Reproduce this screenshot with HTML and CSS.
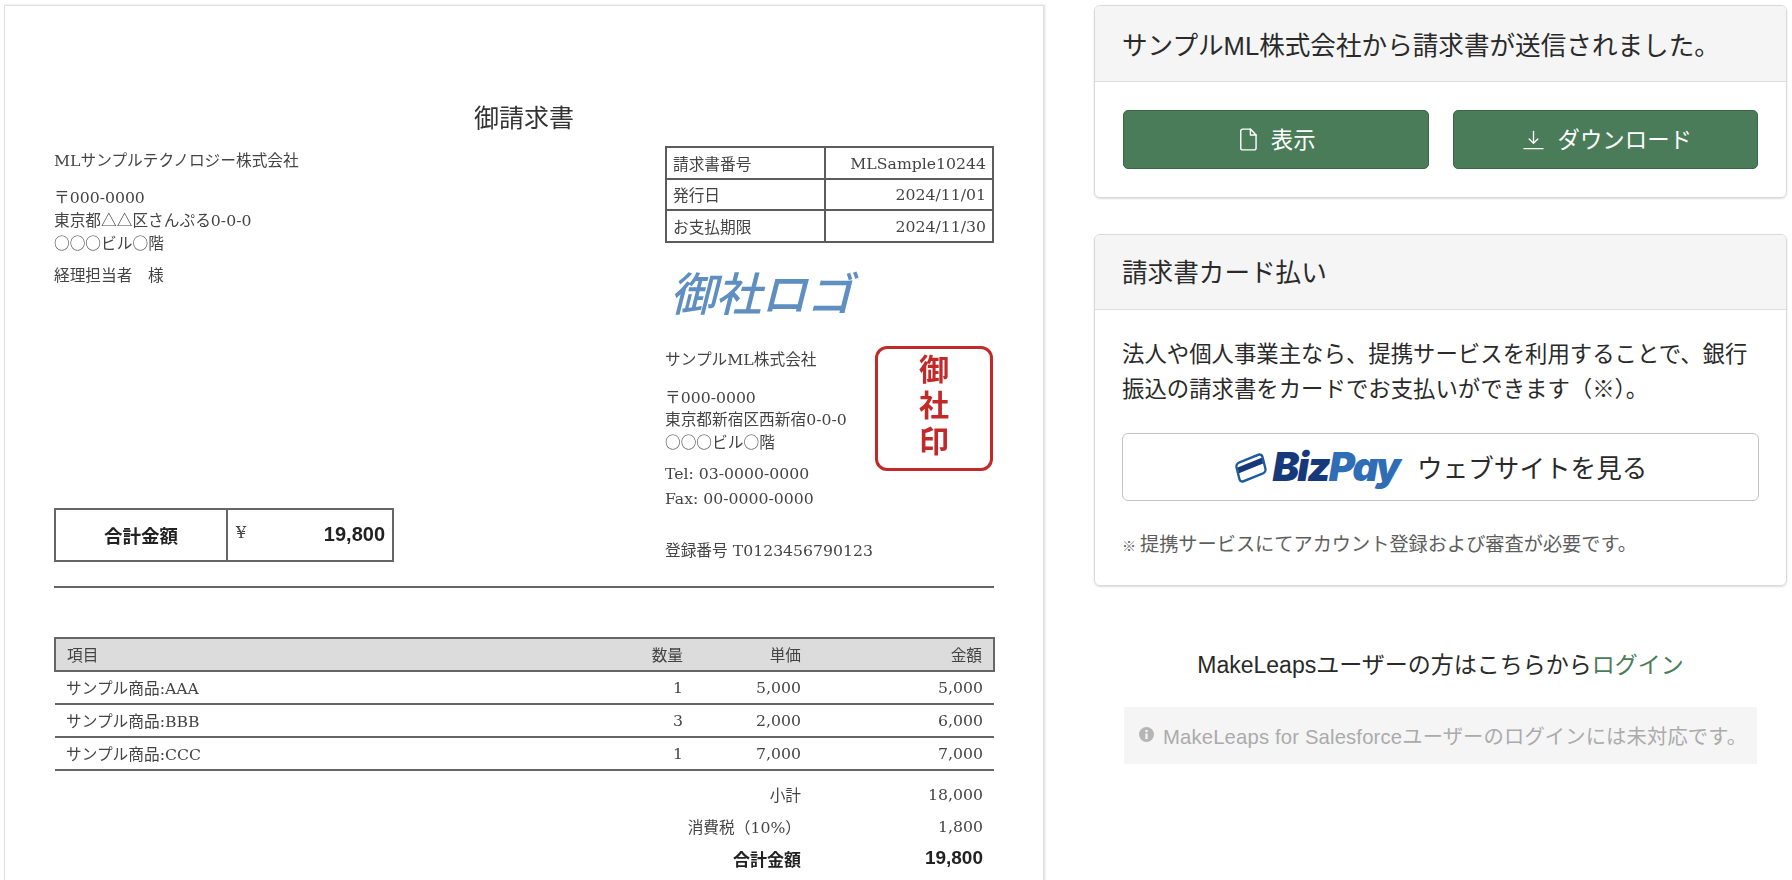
FILE: index.html
```html
<!DOCTYPE html>
<html lang="ja">
<head>
<meta charset="utf-8">
<title>御請求書</title>
<link rel="stylesheet" href="styles.css">
</head>
<body>
<main class="page">
  <section class="doc">
    <div class="doc-inner">
      <h1 class="doc-title">御請求書</h1>
      <div class="doc-top">
        <div class="doc-left">
          <p class="line">MLサンプルテクノロジー株式会社</p>
          <p class="line gap-16">〒000-0000</p>
          <p class="line">東京都<span class="sym">△△</span>区さんぷる0-0-0</p>
          <p class="line"><span class="sym">○○○</span>ビル<span class="sym">○</span>階</p>
          <p class="line gap-10">経理担当者　様</p>
          <div class="total-box">
            <div class="total-label">合計金額</div>
            <div class="total-value"><span class="yen">¥</span><span class="total-num">19,800</span></div>
          </div>
        </div>
        <div class="doc-right">
          <table class="meta">
            <tr><td>請求書番号</td><td class="r">MLSample10244</td></tr>
            <tr><td>発行日</td><td class="r">2024/11/01</td></tr>
            <tr><td>お支払期限</td><td class="r">2024/11/30</td></tr>
          </table>
          <div class="logo-text">御社ロゴ</div>
          <div class="issuer">
            <div class="issuer-text">
              <p class="line">サンプルML株式会社</p>
              <p class="line gap-16">〒000-0000</p>
              <p class="line">東京都新宿区西新宿0-0-0</p>
              <p class="line"><span class="sym">○○○</span>ビル<span class="sym">○</span>階</p>
              <p class="line gap-10">Tel: 03-0000-0000</p>
              <p class="line gap-3">Fax: 00-0000-0000</p>
            </div>
            <div class="stamp"><span class="stamp-text">御社印</span></div>
          </div>
          <p class="line reg">登録番号 T0123456790123</p>
        </div>
      </div>
      <div class="rule"></div>
      <table class="items">
        <colgroup><col class="c1"><col class="c2"><col class="c3"><col class="c4"></colgroup>
        <thead>
          <tr><th class="l">項目</th><th>数量</th><th>単価</th><th>金額</th></tr>
        </thead>
        <tbody>
          <tr><td class="l">サンプル商品:AAA</td><td>1</td><td>5,000</td><td>5,000</td></tr>
          <tr><td class="l">サンプル商品:BBB</td><td>3</td><td>2,000</td><td>6,000</td></tr>
          <tr><td class="l">サンプル商品:CCC</td><td>1</td><td>7,000</td><td>7,000</td></tr>
        </tbody>
        <tfoot>
          <tr class="sum-first"><td colspan="3">小計</td><td>18,000</td></tr>
          <tr><td colspan="3">消費税（10%）</td><td>1,800</td></tr>
          <tr class="sum-total"><td colspan="3">合計金額</td><td class="sum-num">19,800</td></tr>
        </tfoot>
      </table>
    </div>
  </section>

  <aside class="side">
    <section class="card">
      <header class="card-head">サンプルML株式会社から請求書が送信されました。</header>
      <div class="card-body actions">
        <a class="btn">
          <svg class="ico-file" viewBox="0 0 18 24" fill="none" stroke="#fff" stroke-width="1.5" stroke-linejoin="round" stroke-linecap="round"><path d="M2.8 1h8.2l6 6.2v13.8a2 2 0 0 1-2 2H2.8a2 2 0 0 1-2-2V3a2 2 0 0 1 2-2z"/><path d="M11 1v6.2h6"/></svg>
          <span class="btn-text">表示</span>
        </a>
        <a class="btn">
          <svg class="ico-dl" viewBox="0 0 22 20" fill="none" stroke="#fff" stroke-width="1.4" stroke-linecap="round" stroke-linejoin="round"><path d="M11 1v12"/><path d="M6.5 9l4.5 4.5L15.500 9"/><path d="M1 19h20"/></svg>
          <span class="btn-text">ダウンロード</span>
        </a>
      </div>
    </section>

    <section class="card card-pay">
      <header class="card-head card-head-pay">請求書カード払い</header>
      <div class="card-body pay">
        <p class="pay-text">法人や個人事業主なら、提携サービスを利用することで、銀行振込の請求書をカードでお支払いができます（※）。</p>
        <a class="biz-btn">
          <span class="biz-logo">
            <svg class="biz-card" viewBox="0 0 36 32" fill="none"><g transform="rotate(-22 18 16) skewX(-8)"><rect x="5" y="7" width="28" height="19" rx="3.5" stroke="#1f5a9e" stroke-width="2.4" fill="#fff"/><rect x="6" y="11" width="26" height="6" fill="#17397a"/></g></svg>
            <span class="biz-word"><span class="biz-a">Biz</span><span class="biz-b">Pay</span></span>
          </span>
          <span class="biz-text">ウェブサイトを見る</span>
        </a>
        <p class="pay-note"><span class="mark">※</span>提携サービスにてアカウント登録および審査が必要です。</p>
      </div>
    </section>

    <p class="login">MakeLeapsユーザーの方はこちらから<a class="login-link">ログイン</a></p>
    <div class="notice">
      <svg class="ico-info" viewBox="0 0 16 16"><circle cx="8" cy="8" r="8" fill="#b5b5b5"/><rect x="6.800" y="6.800" width="2.400" height="6" fill="#f5f5f5"/><circle cx="8" cy="4.300" r="1.400" fill="#f5f5f5"/></svg>
      <span class="notice-text">MakeLeaps for Salesforceユーザーのログインには未対応です。</span>
    </div>
  </aside>
</main>
</body>
</html>
```
FILE: styles.css
```css
* { box-sizing: border-box; }
html, body { margin: 0; height: 880px; overflow: hidden; background: #fff; }
p, h1 { margin: 0; }

.page {
  display: flex;
  align-items: flex-start;
  padding: 5px 5px 0 4px;
  font-family: "Liberation Sans", "Noto Sans CJK JP", sans-serif;
  color: #2a2a2a;
}

/* Invoice document */
.doc {
  flex: none;
  width: 1040px;
  height: 900px;
  border: 1px solid #e0e0e0;
  border-bottom: 0;
  box-shadow: 1px 0 2px rgba(0, 0, 0, .14);
  font-family: "DejaVu Serif", "Noto Sans CJK JP", serif;
  font-size: 15.700px;
  color: #444;
}
.doc-inner {
  padding: 98px 49px 0 49px;
  filter: blur(.35px);
}
.doc-title {
  font-size: 25px;
  font-weight: 400;
  line-height: 30px;
  text-align: center;
  color: #333;
  margin-bottom: 12px;
}
.sym { font-family: "Noto Sans CJK JP", sans-serif; }
.doc-top { display: flex; justify-content: space-between; }
.doc-left { width: 340px; display: flex; flex-direction: column; }
.doc-right { width: 329px; }
.line { line-height: 22px; }
.doc-left > .line:first-child { margin-top: 4px; }
.gap-16 { margin-top: 16px; }
.gap-10 { margin-top: 10px; }
.gap-3 { margin-top: 3px; }
.doc-left .gap-16 { margin-top: 15px; }
.issuer-text .gap-10 { margin-top: 9px; }

.total-box {
  margin-top: auto;
  height: 54px;
  display: flex;
  border: 2px solid #666;
}
.total-label {
  width: 172px;
  border-right: 2px solid #666;
  display: flex;
  align-items: center;
  justify-content: center;
  font-size: 18.500px;
  font-weight: 700;
  color: #222;
}
.total-value {
  flex: 1;
  display: flex;
  align-items: center;
  justify-content: space-between;
  padding: 0 7px 0 8px;
}
.yen { font-size: 16px; margin-top: -5px; }
.total-num {
  font-family: "Liberation Sans", sans-serif;
  font-size: 20px;
  font-weight: 700;
  color: #222;
}

.meta {
  width: 100%;
  border-collapse: collapse;
  border: 2px solid #5c5c5c;
}
.meta td {
  height: 31.500px;
  padding: 1px 6px 0;
  border: 2px solid #5c5c5c;
}
.meta td:first-child { width: 159px; }
.r { text-align: right; }

.logo-text {
  margin-top: 23px;
  height: 50px;
  padding-left: 5px;
  font-family: "Noto Sans CJK JP", sans-serif;
  font-size: 46px;
  line-height: 50px;
  font-weight: 500;
  font-style: italic;
  color: #5f8fc0;
  letter-spacing: -.5px;
}
.issuer {
  margin-top: 30px;
  display: flex;
  justify-content: space-between;
  height: 172px;
}
.issuer-text { padding-top: 3px; }
.stamp {
  flex: none;
  width: 118px;
  height: 125px;
  margin-right: 1px;
  border: 3.5px solid #c22a2a;
  border-radius: 12px;
  display: flex;
  align-items: center;
  justify-content: center;
  font-family: "Noto Sans CJK JP", sans-serif;
  font-size: 30px;
  line-height: 1;
  font-weight: 700;
  color: #c22a2a;
}
.stamp-text {
  writing-mode: vertical-rl;
  text-orientation: upright;
  letter-spacing: 6px;
}
.reg { margin-top: 22px; }

.rule {
  height: 2px;
  margin-top: 24px;
  background: #666;
}

.items {
  width: 939px;
  margin-top: 49px;
  table-layout: fixed;
  border-collapse: collapse;
}
.c1 { width: 539px; }
.c2 { width: 100px; }
.c3 { width: 118px; }
.c4 { width: 182px; }
.items th, .items td {
  height: 33px;
  padding: 1px 11px 0 0;
  text-align: right;
  font-weight: 400;
}
.items th { height: 33px; background: #dcdcdc; border-top: 2px solid #666; border-bottom: 2px solid #666; }
.items th:first-child { border-left: 2px solid #666; }
.items th:last-child { border-right: 2px solid #666; }
.items .l { text-align: left; padding-left: 11px; }
.items tbody td { border-bottom: 2px solid #666; }
.items tfoot td { height: 32px; }
.items .sum-first td { height: 40px; padding-top: 9px; }
.items .sum-total td { font-weight: 700; font-size: 17px; color: #222; }
.items .sum-total .sum-num {
  font-family: "Liberation Sans", sans-serif;
  font-size: 19px;
}

/* Right column */
.side {
  flex: none;
  width: 693px;
  margin-left: 50px;
}
.card {
  border: 1px solid #d9d9d9;
  border-radius: 6px;
  box-shadow: 0 1px 2px rgba(0, 0, 0, .14);
  overflow: hidden;
}
.card-pay { margin-top: 36px; }
.card-head {
  height: 76px;
  padding: 0 27px;
  display: flex;
  align-items: center;
  background: #f5f5f5;
  border-bottom: 1px solid #ddd;
  font-size: 25.600px;
}
.card-head-pay { height: 75px; padding-bottom: 4px; }
.actions {
  display: flex;
  gap: 24px;
  padding: 28px 28px;
}
.btn {
  flex: 1;
  height: 59px;
  display: flex;
  align-items: center;
  justify-content: center;
  gap: 14px;
  padding-left: 4px;
  background: #4a7c59;
  border: 1px solid #3c6649;
  border-radius: 5px;
  color: #fff;
  font-size: 22.400px;
}
.btn-text { margin-top: -3px; }
.ico-file { width: 17px; height: 23px; margin-top: -1px; }
.ico-dl { width: 21px; height: 20px; }

.pay { padding: 27px 27px 24px; }
.pay-text { font-size: 22.400px; line-height: 35px; }
.biz-btn {
  margin-top: 26px;
  height: 68px;
  display: flex;
  align-items: center;
  justify-content: center;
  gap: 18px;
  border: 1px solid #c4c4c4;
  border-radius: 6px;
  font-size: 25.600px;
}
.biz-text { margin-top: -2px; }
.biz-logo { display: flex; align-items: center; gap: 3px; }
.biz-card { width: 36px; height: 32px; }
.biz-word {
  font-family: "Inter", "Liberation Sans", sans-serif;
  font-size: 40px;
  line-height: 40px;
  font-weight: 900;
  font-style: italic;
  letter-spacing: -2px;
}
.biz-a { color: #17397a; }
.biz-b { color: #2f6db5; }
.pay-note {
  margin-top: 29px;
  font-size: 19.200px;
  line-height: 30px;
  color: #5e5e5e;
}
.mark { font-size: 14px; margin-right: 4px; }

.login {
  margin-top: 62px;
  text-align: center;
  font-size: 23px;
  line-height: 34px;
}
.login-link { color: #4a7c59; }
.notice {
  margin: 25px 30px 0;
  height: 57px;
  padding: 0 0 2px 15px;
  display: flex;
  align-items: center;
  gap: 9px;
  background: #f5f5f5;
  color: #ababab;
  font-size: 20.300px;
}
.notice-text { letter-spacing: .15px; }
.ico-info { width: 15px; height: 15px; flex: none; }
```
